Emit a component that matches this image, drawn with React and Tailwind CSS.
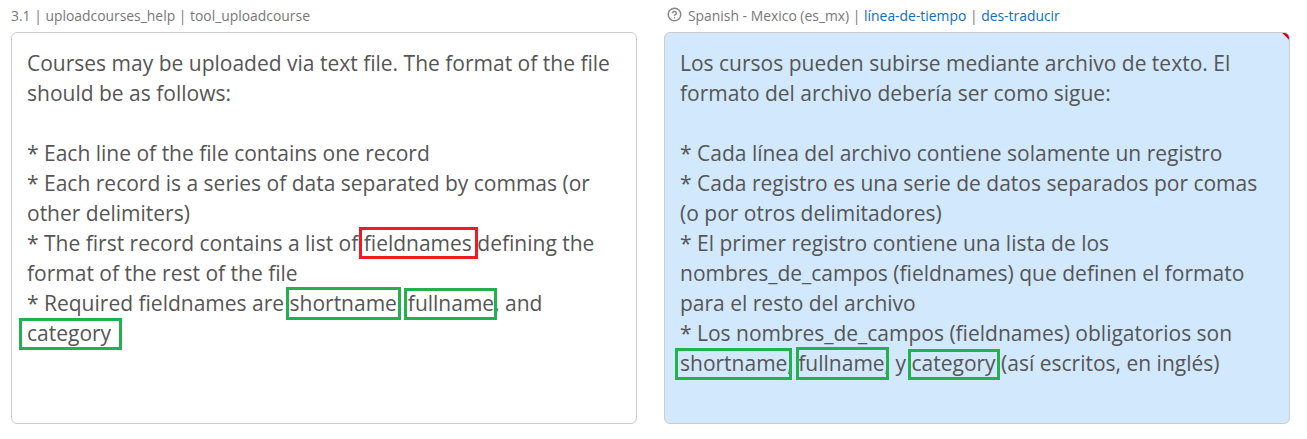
import React from 'react';
import { CircleHelp } from 'lucide-react';

// Caixa colorida sobre a palavra destacada
function Mark({ children, box }) {
    return (
        <span className="relative">
            {children}
            <span className={`absolute border-[3px] ${box}`} />
        </span>
    );
}

const RED = 'border-[#ed1c24]';
const GREEN = 'border-[#22b14c]';

export default function App() {
    return (
        <div className="w-[1307px] h-[439px] bg-white overflow-hidden grid grid-cols-[626px_626px] gap-x-[27px] pl-[11px] pt-[6px] font-['Open_Sans',sans-serif]">
            <div>
                <div className="h-[26px] text-[13.9px] leading-[20px] text-[#777777]">
                    3.1 | uploadcourses_help | tool_uploadcourse
                </div>
                <div className="h-[392px] border border-[#cccccc] rounded-[6px] bg-white px-[15px] pt-[15px] text-[21px] leading-[30px] text-[#555555] whitespace-pre-line">
                    Courses may be uploaded via text file. The format of the file should be as follows:
                    {'\n\n'}* Each line of the file contains one record
                    {'\n'}* Each record is a series of data separated by commas (or other delimiters)
                    {'\n'}* The first record contains a list of <Mark box={`${RED} -left-[5px] -right-[6px] -top-[2px] -bottom-[2px]`}>fieldnames</Mark> defining the format of the rest of the file
                    {'\n'}* Required fieldnames are <Mark box={`${GREEN} -left-[4px] right-[1px] -top-[2px] -bottom-[3px]`}>shortname,</Mark> <Mark box={`${GREEN} -left-[4px] right-[3px] -top-[1px] -bottom-[3px]`}>fullname,</Mark> and
                    {'\n'}<Mark box={`${GREEN} -left-[8px] -right-[11px] -top-[1px] -bottom-[3px]`}>category</Mark>
                </div>
            </div>
            <div>
                <div className="h-[26px] flex items-start gap-[6px] text-[13.9px] leading-[20px] text-[#777777] ml-[3px]">
                    <CircleHelp size={15} strokeWidth={2.4} className="text-[#888888] mt-px" />
                    <span>
                        Spanish - Mexico (es_mx) | <span className="text-[#0f6cbf]">línea-de-tiempo</span> | <span className="text-[#0f6cbf]">des-traducir</span>
                    </span>
                </div>
                <div className="relative h-[392px] border border-[#cccccc] rounded-[6px] bg-[#d2e8fd] px-[15px] pt-[15px] text-[21px] leading-[30px] text-[#555555] whitespace-pre-line overflow-hidden">
                    <span className="absolute -top-[6px] -right-[6px] w-[11px] h-[11px] rotate-45 bg-[#d2001e]" />
                    Los cursos pueden subirse mediante archivo de texto. El formato del archivo debería ser como sigue:
                    {'\n\n'}* Cada línea del archivo contiene solamente un registro
                    {'\n'}* Cada registro es una serie de datos separados por comas (o por otros delimitadores)
                    {'\n'}* El primer registro contiene una lista de los nombres_de_campos (fieldnames) que definen el formato para el resto del archivo
                    {'\n'}* Los nombres_de_campos (fieldnames) obligatorios son
                    {'\n'}<Mark box={`${GREEN} -left-[5px] right-[1px] -top-[1px] -bottom-[3px]`}>shortname,</Mark> <Mark box={`${GREEN} -left-[2px] right-[1px] -top-[2px] -bottom-[3px]`}>fullname,</Mark> y <Mark box={`${GREEN} -left-[3px] -right-[4px] top-[0px] -bottom-[3px]`}>category</Mark> (así escritos, en inglés)
                </div>
            </div>
        </div>
    );
}
